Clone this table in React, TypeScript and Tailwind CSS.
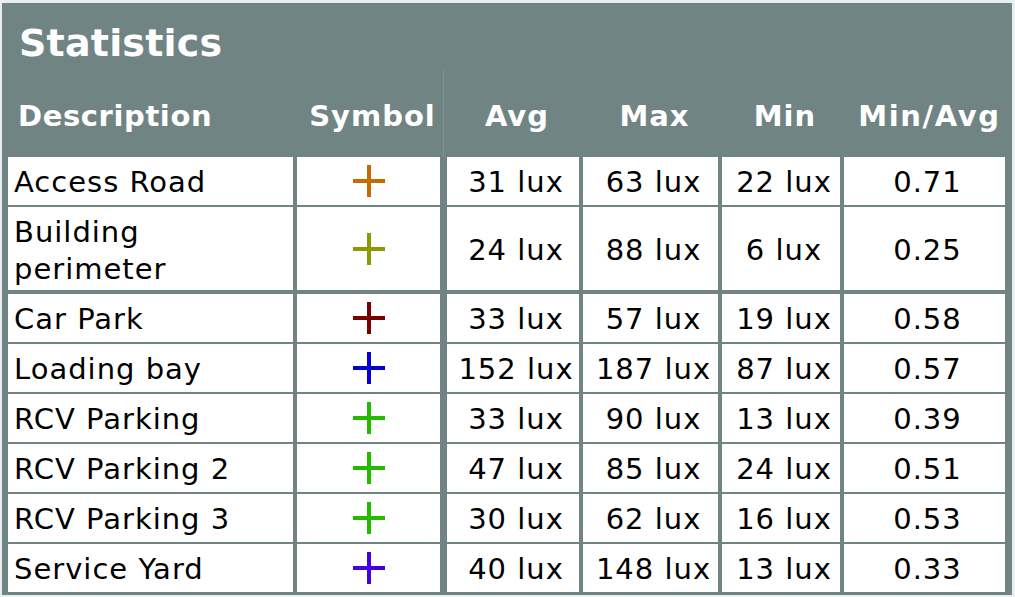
import React from 'react'

type Row = {
  name: string
  color: string
  avg: string
  max: string
  min: string
  ratio: string
  tall?: boolean
}

const rows: Row[] = [
  { name: 'Access Road', color: '#c46c00', avg: '31 lux', max: '63 lux', min: '22 lux', ratio: '0.71' },
  { name: 'Building perimeter', color: '#8c9a00', avg: '24 lux', max: '88 lux', min: '6 lux', ratio: '0.25', tall: true },
  { name: 'Car Park', color: '#7a0000', avg: '33 lux', max: '57 lux', min: '19 lux', ratio: '0.58' },
  { name: 'Loading bay', color: '#0000d2', avg: '152 lux', max: '187 lux', min: '87 lux', ratio: '0.57' },
  { name: 'RCV Parking', color: '#22bb00', avg: '33 lux', max: '90 lux', min: '13 lux', ratio: '0.39' },
  { name: 'RCV Parking 2', color: '#22bb00', avg: '47 lux', max: '85 lux', min: '24 lux', ratio: '0.51' },
  { name: 'RCV Parking 3', color: '#22bb00', avg: '30 lux', max: '62 lux', min: '16 lux', ratio: '0.53' },
  { name: 'Service Yard', color: '#4400e0', avg: '40 lux', max: '148 lux', min: '13 lux', ratio: '0.33' },
]

function Plus({ color }: { color: string }) {
  return (
    <svg width="32" height="32" viewBox="0 0 32 32">
      <line x1="16" y1="0" x2="16" y2="32" stroke={color} strokeWidth="4" />
      <line x1="0" y1="16" x2="32" y2="16" stroke={color} strokeWidth="4" />
    </svg>
  )
}

const cols = 'grid grid-cols-[285px_143px_135px_135px_118px_161px] gap-x-[4px]'

export default function App() {
  return (
    <main className="min-h-screen bg-[#e9eeee] pt-[3px] pl-[2px] font-['DejaVu_Sans',sans-serif]">
      <div className="w-[1010px] bg-[#718484] pl-[6px] pr-[4px] pb-[5px]">
        <div className="h-[67px] flex items-center pt-[12px] pl-[11px] text-[38px] font-bold leading-none text-white tracking-[0.2px]">
          Statistics
        </div>

        <div className={`${cols} h-[87px] pt-[6px] text-[29px] font-bold leading-none text-white tracking-[1px]`}>
          <div className="flex items-center pl-[10px] tracking-[0.6px]">Description</div>
          <div className="flex items-center justify-center pl-[8px]">Symbol</div>
          <div className="flex items-center justify-center pl-[8px] ml-[3px] relative">
            <span className="absolute left-[-4px] top-[-6px] bottom-0 w-px bg-[#7f9292]" />
            Avg
          </div>
          <div className="flex items-center justify-center pl-[8px]">Max</div>
          <div className="flex items-center justify-center pl-[8px]">Min</div>
          <div className="flex items-center justify-center pl-[10px] tracking-[1.6px]">Min/Avg</div>
        </div>

        <div className="flex flex-col gap-y-[4px] text-[29px] text-black tracking-[1px]">
          {rows.map((r) => (
            <div key={r.name} className={`${cols} ${r.tall ? 'h-[83px]' : 'h-[46px]'}`}>
              <div className="bg-white flex items-center pl-[6px] pt-[4px] leading-[37px]">
                {r.tall ? (
                  <span>
                    Building
                    <br />
                    perimeter
                  </span>
                ) : (
                  r.name
                )}
              </div>
              <div className="bg-white flex items-center justify-center">
                <Plus color={r.color} />
              </div>
              <div className="bg-white flex items-center justify-center pt-[4px] pl-[6px] ml-[3px]">{r.avg}</div>
              <div className="bg-white flex items-center justify-center pt-[4px] pl-[6px]">{r.max}</div>
              <div className="bg-white flex items-center justify-center pt-[4px] pl-[6px]">{r.min}</div>
              <div className="bg-white flex items-center justify-center pt-[4px] pl-[6px]">{r.ratio}</div>
            </div>
          ))}
        </div>
      </div>
    </main>
  )
}
